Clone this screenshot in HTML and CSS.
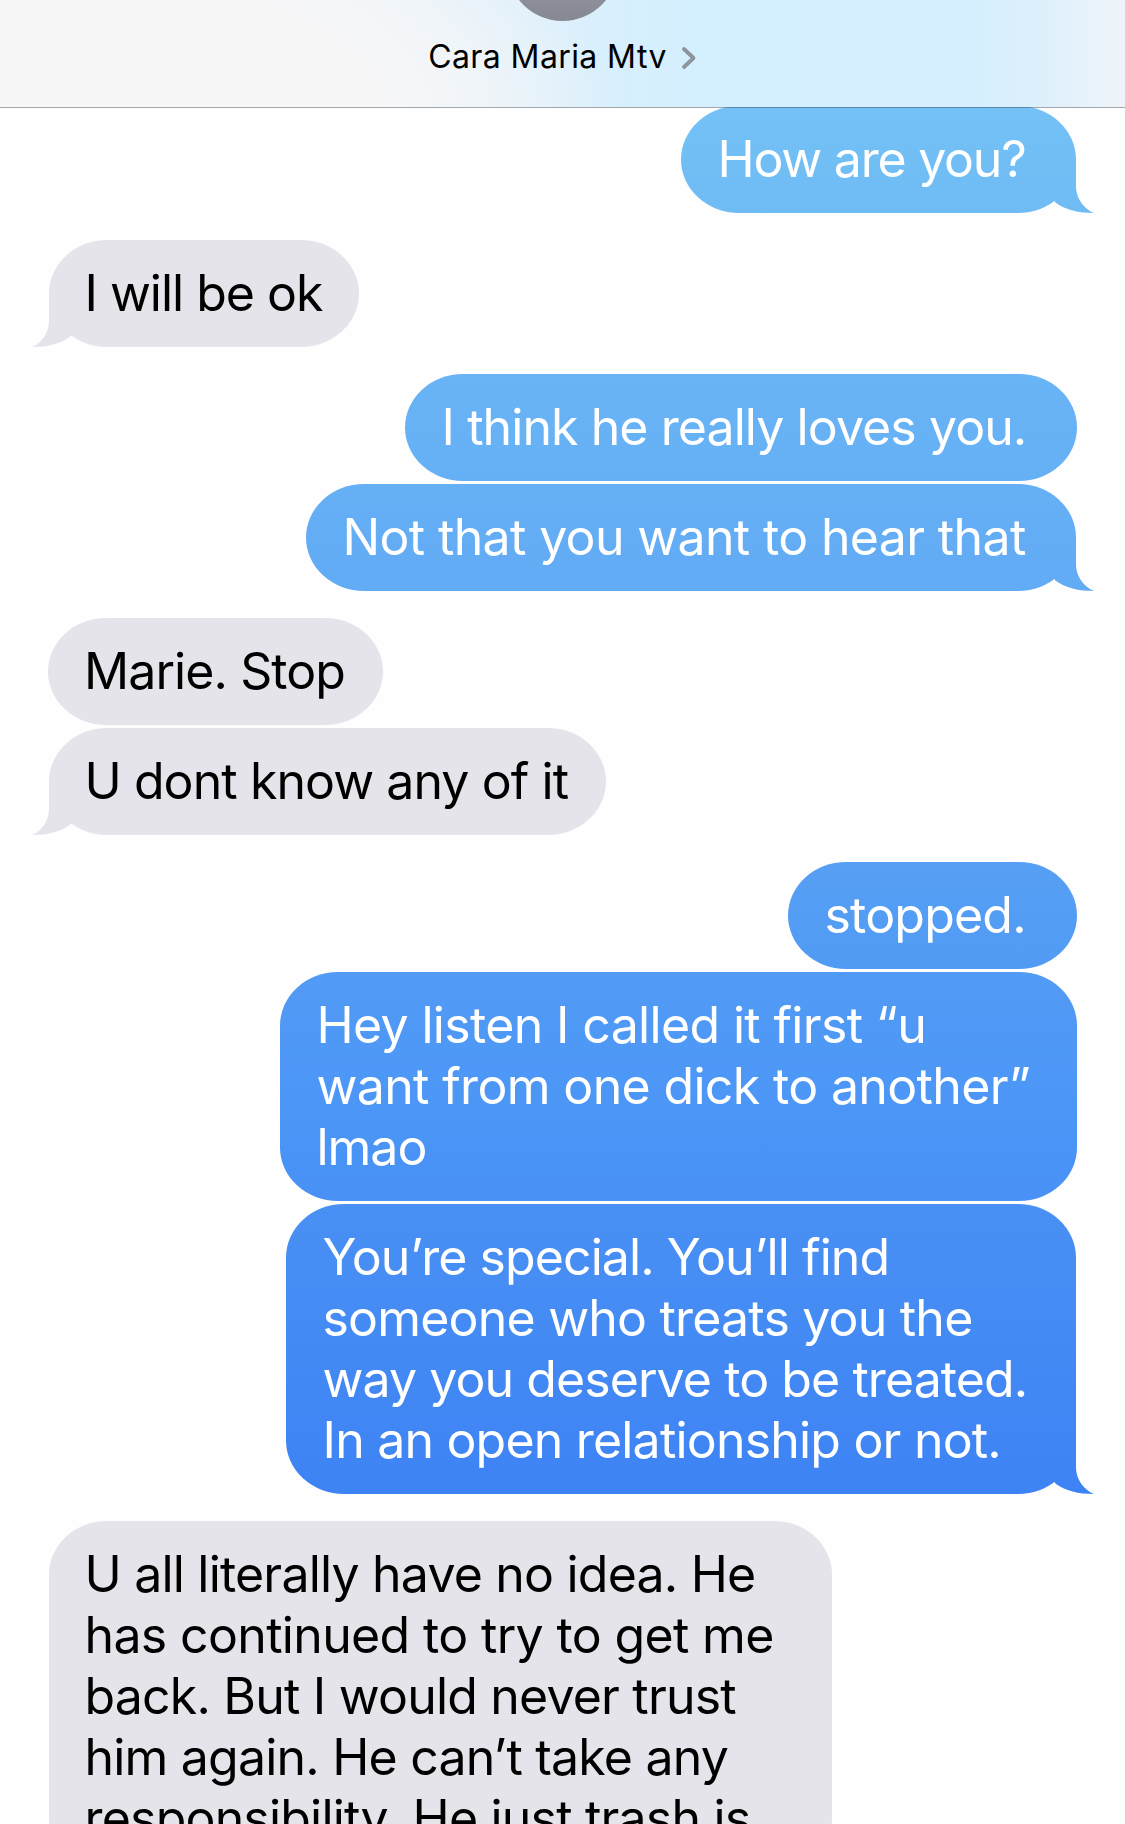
FILE: index.html
```
<!DOCTYPE html>
<html lang="en">
<head>
    <meta charset="UTF-8">
    <title>Messages</title>
    <link rel="stylesheet" href="styles.css">
</head>
<body>
    <header class="topbar">
        <div class="avatar"></div>
        <div class="contact">
            <span class="contact-name">Cara Maria Mtv</span>
            <svg class="chevron" width="16" height="24" viewBox="0 0 16 24">
                <path d="M3 3 L12.5 12 L3 21" fill="none" stroke="#8d949c" stroke-width="3.8" stroke-linecap="round" stroke-linejoin="round"/>
            </svg>
        </div>
    </header>
    <main class="chat">
        <div class="group sent">
            <div class="bubble tail how"><span class="line tightest">How are you?</span></div>
        </div>
        <div class="group received">
            <div class="bubble tail ok"><span class="line tighter">I will be ok</span></div>
        </div>
        <div class="group sent">
            <div class="bubble loves"><span class="line tight">I think he really loves you.</span></div>
            <div class="bubble tail hear"><span class="line loose">Not that you want to hear that</span></div>
        </div>
        <div class="group received">
            <div class="bubble marie"><span class="line tight">Marie. Stop</span></div>
            <div class="bubble tail know"><span class="line tight">U dont know any of it</span></div>
        </div>
        <div class="group sent">
            <div class="bubble stopped"><span class="line">stopped.</span></div>
            <div class="bubble listen">
                <span class="line loose">Hey listen I called it first “u</span>
                <span class="line loose">want from one dick to another”</span>
                <span class="line tighter">lmao</span>
            </div>
            <div class="bubble tail special">
                <span class="line tight">You’re special. You’ll find</span>
                <span class="line">someone who treats you the</span>
                <span class="line tight">way you deserve to be treated.</span>
                <span class="line">In an open relationship or not.</span>
            </div>
        </div>
        <div class="group received">
            <div class="bubble idea">
                <span class="line">U all literally have no idea. He</span>
                <span class="line loose">has continued to try to get me</span>
                <span class="line">back. But I would never trust</span>
                <span class="line">him again. He can’t take any</span>
                <span class="line">responsibility. He just trash is</span>
            </div>
        </div>
    </main>
</body>
</html>
```
FILE: styles.css
```
* {
    box-sizing: border-box;
}
body {
    font-family: Inter, "Liberation Sans", sans-serif;
    margin: 0;
    height: 1824px;
    background: #fefefe;
    overflow: hidden; /* last message runs off the screen */
}

/* Top bar */
.topbar {
    position: relative;
    z-index: 1;
    height: 108px;
    display: flex;
    flex-direction: column;
    align-items: center;
    background:
        radial-gradient(620px 210px at 0 100%, #f7f7f8 0%, #f7f7f8 60%, rgba(247, 247, 248, 0) 100%),
        linear-gradient(90deg, #f8f8f8 0%, #f7f7f8 20%, #ebf3f9 36%, #e3f1fa 45%, #d8effd 54%, #d4effe 62%, #d6effe 87%, #dff0fc 93%, #ebf3fa 98%, #eef3f9 100%);
    border-bottom: 1px solid rgba(70, 80, 90, 0.5);
    background-clip: padding-box;
}
.avatar {
    width: 111px;
    height: 111px;
    margin-top: -90px;
    flex-shrink: 0;
    border-radius: 50%;
    background: linear-gradient(#a5aab6, #868892);
}
.contact {
    display: flex;
    align-items: center;
    gap: 14px;
    margin-top: 16px;
}
.contact-name {
    font-size: 32px;
    line-height: 40px;
    letter-spacing: 0.4px;
    color: #000;
}
.chevron {
    margin-top: 2px;
}

/* Messages */
.chat {
    display: flex;
    flex-direction: column;
    gap: 27px;
    margin-top: -2px;
    padding: 0 49px;
}
.group {
    display: flex;
    flex-direction: column;
    gap: 3px;
}
.sent {
    align-items: flex-end;
}
.received {
    align-items: flex-start;
}
.bubble {
    position: relative;
    padding: 23.25px 0 22.75px 35.5px;
    border-radius: 58px / 53.5px;
    font-size: 50px;
    line-height: 61px;
    letter-spacing: -0.8px;
}
.sent .bubble,
.sent .tail::after {
    color: #fff;
    background: linear-gradient(#78c6f6 0px, #73c1f5 107px, #69b4f5 374px, #62abf5 590px, #569ff4 862px, #4b95f7 1130px, #488ff4 1230px, #3e83f4 1493px) fixed;
}
.sent .bubble {
    padding-left: 36.5px;
}
.received .bubble,
.received .tail::after {
    color: #000;
    background: #e5e4ea;
}
.line {
    display: block;
    white-space: nowrap;
}
.loose {
    letter-spacing: -0.65px;
}
.tight {
    letter-spacing: -0.92px;
}
.tighter {
    letter-spacing: -1.02px;
}
.tightest {
    letter-spacing: -1.23px;
}

/* Little hook in the bottom corner */
.tail::after {
    content: "";
    position: absolute;
    right: -18px;
    bottom: 0;
    width: 60px;
    height: 55px;
    clip-path: path("M42 0 L42 29 C42 40 50 51 60 55 C45 55 31 52 21.3 44.5 L10 20 Z");
}
/* mirrored, with the straight side lined up with the left edge */
.received .tail::after {
    right: auto;
    left: -17px;
    transform: scaleX(-1);
    clip-path: path("M43 0 L43 29 C43 40 50 51 60 55 C45 55 31 52 21.3 44.5 L10 20 Z");
}

/* Bubbles without a tail sit one pixel further out */
.sent .bubble:not(.tail) {
    margin-right: -1px;
}
.received .marie {
    margin-left: -1px;
    padding-left: 36px;
}

.how { width: 395px; }
.ok { width: 310px; }
.loves { width: 672px; }
.hear { width: 770px; }
.marie { width: 335px; }
.know { width: 557px; }
.stopped { width: 289px; }
.listen { width: 797px; padding-left: 35.5px; }
.special { width: 790px; }
.idea { width: 783px; }
```
